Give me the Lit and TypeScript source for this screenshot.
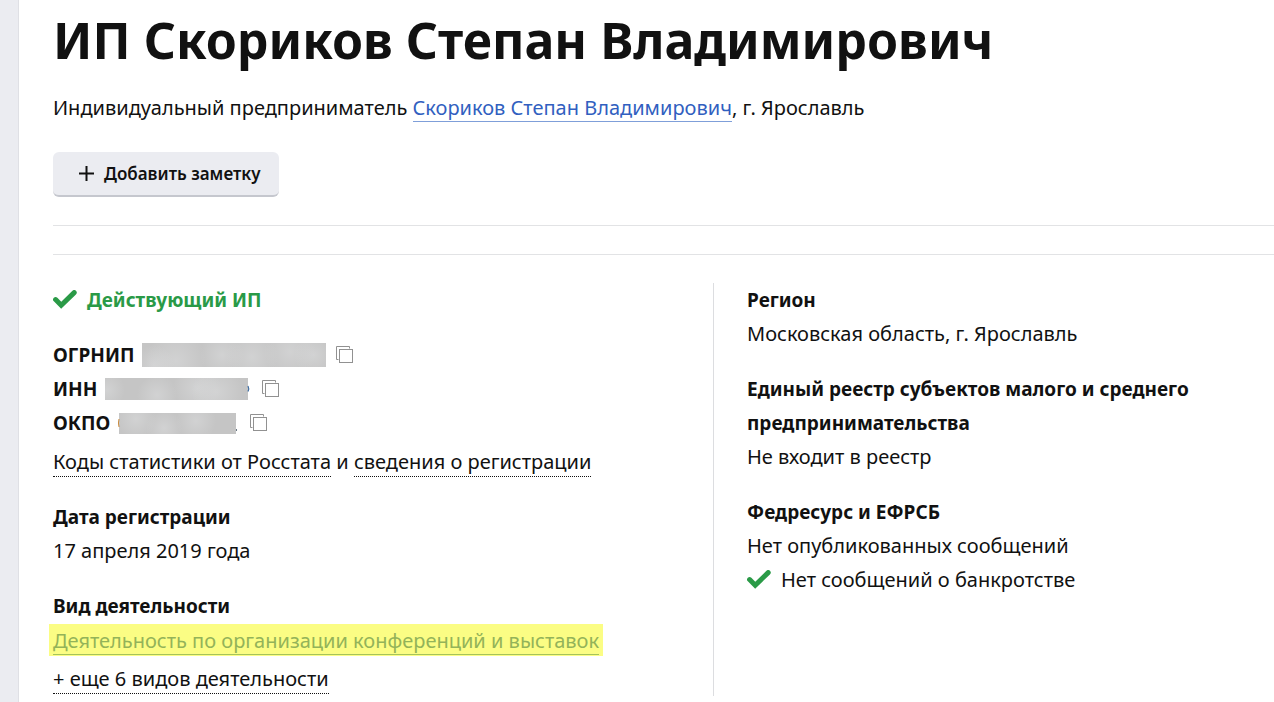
import { LitElement, html, css, svg } from "lit";
import { customElement } from "lit/decorators.js";

const check = html`<svg class="check" viewBox="0 0 24 20" width="24" height="20" aria-hidden="true">
  <path d="M2.6 9.6 L8.2 15.2 L21.2 2.6" fill="none" stroke="#2a9a47" stroke-width="5" stroke-linecap="round" stroke-linejoin="miter" />
</svg>`;

interface Requisite {
  label: string;
  start: number;
  bar: number;
  width: number;
  height: number;
  /** Light smudges inside the hidden number: centre x, centre y, radius. */
  smudges: [number, number, number][];
  edge: unknown;
}

const requisites: Requisite[] = [
  {
    label: "ОГРНИП", start: 0, bar: 184, width: 184, height: 24,
    smudges: [[34, 18, 30], [80, 12, 22], [148, 9, 26], [12, 22, 20], [110, 14, 26], [172, 12, 20]],
    edge: null,
  },
  {
    label: "ИНН", start: 0, bar: 143, width: 147, height: 22,
    smudges: [[2, 12, 18], [52, 17, 20], [92, 10, 24], [112, 14, 26]],
    edge: svg`<path d="M143 8 q1.4 2.5 0 5.5" fill="none" stroke="#3b6aa0" stroke-width="1.2" />`,
  },
  {
    label: "ОКПО", start: 1, bar: 117, width: 122, height: 21,
    smudges: [[18, 6, 20], [46, 15, 18], [78, 8, 20]],
    edge: svg`<path d="M1 6 q-1.2 4 0 8" fill="none" stroke="#c98a3c" stroke-width="1" /><rect x="118" y="16" width="1" height="2" fill="#6a7884" />`,
  },
];

@customElement("app-root")
export class AppRoot extends LitElement {
  static styles = css`
    :host {
      display: block;
      min-height: 100vh;
      box-sizing: border-box;
      border-left: 18px solid #ebecf1;
      background: #fff;
      color: #111;
      font: 20px/34px "Noto Sans", "Open Sans", sans-serif;
    }
    .page {
      min-height: 100vh;
      box-sizing: border-box;
      border-left: 1px solid #dfe0e5;
      padding: 7px 0 6px 34px;
    }
    h1, h2, p { margin: 0; }
    .title { font-size: 50px; line-height: 66px; font-weight: 700; }
    .lead { margin-top: 18px; }
    a { color: inherit; text-decoration: none; }
    .link, .dotted { display: inline-block; }
    .link { line-height: 27px; color: #315fc0; border-bottom: 1px solid #7f9fd9; }
    .dotted { line-height: 28px; border-bottom: 1px dotted #111; }
    .note {
      display: flex;
      align-items: center;
      gap: 9px;
      margin: 27px 0 28px;
      padding: 0 18px 0 25px;
      height: 45px;
      border: 0;
      border-bottom: 2px solid #c5c7ce;
      border-radius: 6px;
      background: #ebecf1;
      color: #111;
      font: 600 17px/43px "Noto Sans", "Open Sans", sans-serif;
    }
    .rules { height: 28px; border: solid #e2e3e5; border-width: 1px 0; margin-bottom: 28px; }
    .facts { display: grid; grid-template-columns: 20fr 17fr; }
    .column { display: flex; flex-direction: column; gap: 21px; }
    .side { border-left: 1px solid #dcdde0; padding-left: 33px; }
    h2 { font-size: 19px; line-height: 34px; font-weight: 700; }
    .status { display: flex; align-items: center; gap: 10px; }
    .active { color: #2a9a47; font-size: 19px; font-weight: 700; }
    .check { flex: none; }
    .requisite { display: flex; align-items: center; }
    .requisite dt { font-size: 19px; font-weight: 700; margin-right: 8px; }
    .requisite dd { display: flex; align-items: center; gap: 10px; margin: 0; }
    dl { margin: 0; }
    .copy { display: flex; padding: 0; border: 0; background: none; }
    .more { margin-top: 5px; }
    .marked { display: flex; align-items: center; min-height: 34px; }
    .mark { background: #fbfd84; padding: 0 4px; margin-left: -4px; height: 32px; }
    .mark .link { color: #93b359; border-color: #a5c45c; }
  `;

  private requisite(r: Requisite, i: number) {
    return html`<div class="requisite">
      <dt>${r.label}</dt>
      <dd>
        <svg width=${r.width} height=${r.height} aria-hidden="true">
          <defs>
            <radialGradient id="smudge${i}">
              <stop offset="0" stop-color="#dedfe0" stop-opacity="0.5" />
              <stop offset="1" stop-color="#dedfe0" stop-opacity="0" />
            </radialGradient>
            <clipPath id="bar${i}"><rect x=${r.start} width=${r.bar} height=${r.height} /></clipPath>
          </defs>
          <g clip-path="url(#bar${i})">
            <rect width=${r.width} height=${r.height} fill="#c5c5c5" />
            ${r.smudges.map(([x, y, radius]) => svg`<circle cx=${x} cy=${y} r=${radius} fill="url(#smudge${i})" />`)}
          </g>
          ${r.edge}
        </svg>
        <button class="copy" type="button" aria-label="Скопировать ${r.label}">
          <svg width="18" height="18" viewBox="0 0 18 18" fill="none" stroke="#919191">
            <path d="M13.5 2.5 V.5 H.5 V13.5 H2.5" />
            <rect x="3.5" y="3.5" width="13" height="13" />
          </svg>
        </button>
      </dd>
    </div>`;
  }

  render() {
    return html`<main class="page">
      <h1 class="title">ИП Скориков Степан Владимирович</h1>
      <p class="lead">Индивидуальный предприниматель <a class="link" href="#person">Скориков Степан Владимирович</a>, г. Ярославль</p>
      <button class="note" type="button">
        <svg width="17" height="17" viewBox="0 0 17 17" aria-hidden="true"><path d="M8.5 1 V16 M1 8.5 H16" stroke="#111" stroke-width="2" /></svg>
        Добавить заметку
      </button>
      <div class="rules"></div>
      <div class="facts">
        <div class="column">
          <p class="status active">${check}<span>Действующий ИП</span></p>
          <section>
            <dl>${requisites.map((r, i) => this.requisite(r, i))}</dl>
            <p class="more"><a class="dotted" href="#codes">Коды статистики от Росстата</a> и <a class="dotted" href="#registration">сведения о регистрации</a></p>
          </section>
          <section>
            <h2>Дата регистрации</h2>
            <p>17 апреля 2019 года</p>
          </section>
          <section>
            <h2>Вид деятельности</h2>
            <p class="marked"><span class="mark"><a class="link" href="#activity">Деятельность по организации конференций и выставок</a></span></p>
            <p class="more"><a class="dotted" href="#activities">+ еще 6 видов деятельности</a></p>
          </section>
        </div>
        <div class="column side">
          <section>
            <h2>Регион</h2>
            <p>Московская область, г. Ярославль</p>
          </section>
          <section>
            <h2>Единый реестр субъектов малого и среднего предпринимательства</h2>
            <p>Не входит в реестр</p>
          </section>
          <section>
            <h2>Федресурс и ЕФРСБ</h2>
            <p>Нет опубликованных сообщений</p>
            <p class="status">${check}<span>Нет сообщений о банкротстве</span></p>
          </section>
        </div>
      </div>
    </main>`;
  }
}
